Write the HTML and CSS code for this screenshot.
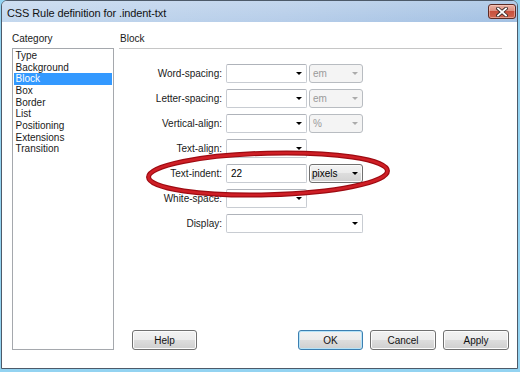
FILE: index.html
```html
<!DOCTYPE html>
<html lang="en">
<head>
    <meta charset="UTF-8">
    <title>CSS Rule definition for .indent-txt</title>
    <link rel="stylesheet" href="styles.css">
</head>
<body>
    <div class="window">
        <div class="titlebar">
            <span class="title">CSS Rule definition for .indent-txt</span>
            <div class="close">
                <svg width="12" height="10" viewBox="0 0 12 10">
                    <path d="M2 1.5 L10 8.5 M10 1.5 L2 8.5" stroke="#3b2a28" stroke-width="3.6" stroke-linecap="square"/>
                    <path d="M2 1.5 L10 8.5 M10 1.5 L2 8.5" stroke="#fff" stroke-width="1.8" stroke-linecap="square"/>
                </svg>
            </div>
        </div>
        <div class="client">
            <div class="sidebar">
                <div class="heading">Category</div>
                <ul class="category-list">
                    <li>Type</li>
                    <li>Background</li>
                    <li class="selected">Block</li>
                    <li>Box</li>
                    <li>Border</li>
                    <li>List</li>
                    <li>Positioning</li>
                    <li>Extensions</li>
                    <li>Transition</li>
                </ul>
            </div>
            <div class="panel">
                <div class="heading panel-heading">Block</div>
                <div class="form">
                    <div class="row">
                        <label class="label">Word-spacing:</label>
                        <div class="combo"><span></span><span class="arrow"></span></div>
                        <div class="unit">em<span class="arrow"></span></div>
                    </div>
                    <div class="row">
                        <label class="label">Letter-spacing:</label>
                        <div class="combo"><span></span><span class="arrow"></span></div>
                        <div class="unit">em<span class="arrow"></span></div>
                    </div>
                    <div class="row">
                        <label class="label">Vertical-align:</label>
                        <div class="combo"><span></span><span class="arrow"></span></div>
                        <div class="unit">%<span class="arrow"></span></div>
                    </div>
                    <div class="row">
                        <label class="label">Text-align:</label>
                        <div class="combo"><span></span><span class="arrow"></span></div>
                    </div>
                    <div class="row">
                        <label class="label">Text-indent:</label>
                        <div class="text-input">22</div>
                        <div class="unit pixels">pixels<span class="arrow"></span></div>
                    </div>
                    <div class="row">
                        <label class="label">White-space:</label>
                        <div class="combo"><span></span><span class="arrow"></span></div>
                    </div>
                    <div class="row">
                        <label class="label">Display:</label>
                        <div class="combo wide"><span></span><span class="arrow"></span></div>
                    </div>
                </div>
                <div class="buttons">
                    <button class="btn help">Help</button>
                    <button class="btn ok">OK</button>
                    <button class="btn">Cancel</button>
                    <button class="btn">Apply</button>
                </div>
            </div>
        </div>
        <!-- red marker drawn over the Text-indent row -->
        <svg class="marker" width="260" height="58" viewBox="0 0 260 58">
            <g transform="rotate(-1.5 128 29)">
                <ellipse cx="128" cy="29" rx="119.5" ry="20.8" fill="none" stroke="#9e0b12" stroke-width="5"/>
                <ellipse cx="128" cy="29" rx="119.5" ry="20.8" fill="none" stroke="#cf1f26" stroke-width="2.6"/>
            </g>
        </svg>
    </div>
</body>
</html>
```

FILE: styles.css
```css
body {
    margin: 0;
    background-color: #93d3f1;
    font-family: "Liberation Sans", Arial, sans-serif;
    font-size: 10px;
    color: #1a1a1a;
}
.window {
    position: relative;
    margin-left: 1px;
    width: 517px;
    height: 369px;
    box-sizing: border-box;
    border: 1px solid #4d5a69;
    border-radius: 6px 6px 0 0;
    background-color: #fff;
    overflow: hidden;
}
.titlebar {
    position: relative;
    height: 21px;
    box-sizing: border-box;
    padding: 5px 0 0 5px;
    line-height: 15px;
    font-size: 11px;
    color: #111;
    background: linear-gradient(to bottom, rgba(255, 255, 255, 0.18), rgba(255, 255, 255, 0)),
                linear-gradient(to right, #c4d8ee, #b6cde9 55%, #a3c1e3);
}
.title {
    letter-spacing: -0.1px;
}
.close {
    position: absolute;
    top: 3px;
    right: 1px;
    width: 28px;
    height: 15px;
    box-sizing: border-box;
    border: 1px solid #5d2b24;
    border-radius: 3px;
    display: flex;
    justify-content: center;
    align-items: center;
    background: linear-gradient(to bottom, #eab2a4 0%, #dc8f80 45%, #c7503d 50%, #cf6650 100%);
    box-shadow: inset 0 0 0 1px rgba(255, 220, 210, 0.45);
}
.client {
    display: flex;
    height: 346px;
    box-sizing: border-box;
    padding: 11px 0 0 10px;
}
.sidebar {
    width: 102px;
    margin-right: 5px;
}
.heading {
    line-height: 12px;
}
.category-list {
    list-style: none;
    margin: 3px 0 0;
    padding: 1px;
    height: 302px;
    box-sizing: border-box;
    border: 1px solid #a5a8ad;
}
.category-list li {
    line-height: 11.67px;
    padding-left: 1.5px;
}
.category-list .selected {
    background-color: #3399ff;
    color: #fff;
}
.panel {
    width: 390px;
    height: 317px;
    display: flex;
    flex-direction: column;
}
.panel-heading {
    padding: 0 0 3px 1px;
    margin-right: 7px;
    border-bottom: 1px solid #c6c6c6;
}
.form {
    margin-top: 15px;
    display: flex;
    flex-direction: column;
    gap: 6px;
}
.row {
    display: flex;
    height: 19px;
}
.label {
    width: 103px;
    margin-right: 4px;
    text-align: right;
    line-height: 19px;
}
.combo, .text-input, .unit {
    height: 19px;
    box-sizing: border-box;
    display: flex;
    align-items: center;
}
.combo {
    width: 81px;
    justify-content: space-between;
    padding: 0 4px 0 3px;
    border: 1px solid #c8ccd2;
    border-top-color: #afb3ba;
    border-radius: 2px;
    background-color: #fff;
}
.combo.wide {
    width: 137px;
}
.text-input {
    width: 81px;
    padding-left: 4px;
    border: 1px solid #c8ccd2;
    border-top-color: #afb3ba;
    border-radius: 2px;
    color: #000;
}
.unit {
    width: 54px;
    margin-left: 2px;
    justify-content: space-between;
    padding: 0 4px 0 3px;
    border: 1px solid #b8bcc1;
    border-radius: 3px;
    background-color: #f4f4f4;
    color: #9a9a9a;
}
.unit .arrow {
    border-top-color: #ababab;
}
.unit.pixels {
    padding-left: 2px;
    border-color: #707070;
    color: #000;
    background: linear-gradient(to bottom, #f3f3f3 0%, #ebebeb 50%, #dddddd 50%, #d2d2d2 100%);
    box-shadow: inset 0 0 0 1px #fbfbfb;
}
.unit.pixels .arrow {
    border-top-color: #000;
}
.arrow {
    width: 0;
    height: 0;
    border-left: 3px solid transparent;
    border-right: 3px solid transparent;
    border-top: 3px solid #000;
}
.buttons {
    margin-top: auto;
    display: flex;
    gap: 7px;
    padding-left: 13px;
}
.btn {
    width: 66px;
    height: 20px;
    padding: 0;
    box-sizing: border-box;
    border: 1px solid #707070;
    border-radius: 3px;
    font-family: "Liberation Sans", Arial, sans-serif;
    font-size: 10px;
    color: #111;
    background: linear-gradient(to bottom, #f2f2f2 0%, #ebebeb 50%, #dddddd 50%, #cfcfcf 100%);
    box-shadow: inset 0 0 0 1px #fcfcfc;
}
.btn.help {
    width: 65px;
    margin-right: auto;
}
.btn.ok {
    width: 65px;
    border-color: #3c7fb1;
    box-shadow: inset 0 0 0 1px #b5e3f8;
}
.marker {
    position: absolute;
    left: 138px;
    top: 144px;
}
```
